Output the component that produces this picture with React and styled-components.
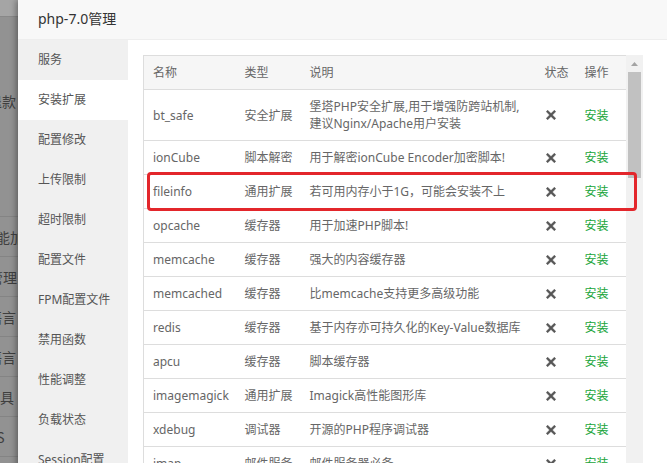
import React from "react";
import styled, { createGlobalStyle } from "styled-components";

const GlobalStyle = createGlobalStyle`
  html, body { margin: 0; padding: 0; overflow: hidden; }
  body {
    font-family: "Noto Sans", "Noto Sans CJK SC", sans-serif;
    font-size: 12px;
    color: #666;
  }
`;

const Page = styled.div`
  position: relative;
  width: 667px;
  height: 463px;
  overflow: hidden;
  background: #929292;
`;

const Backdrop = styled.div`
  display: flex;
  flex-direction: column;
`;

const BackTop = styled.div`
  height: 17px;
  background: #a5a5a5;
  border-bottom: 1px solid #888;
  box-sizing: border-box;
`;

const BackRow = styled.div`
  height: ${(p) => p.$h}px;
  border-bottom: ${(p) => (p.$line ? "1px solid #848484" : "none")};
  box-sizing: border-box;
  display: flex;
  align-items: ${(p) => (p.$top ? "flex-start" : "center")};
  padding-top: ${(p) => (p.$top ? p.$top : 0)}px;
  font-family: "Noto Sans CJK SC", sans-serif;
  font-size: 14px;
  color: #3f3f3f;
  white-space: nowrap;
`;

const BackText = styled.span`
  margin-left: ${(p) => p.$x}px;
`;

const Modal = styled.div`
  position: absolute;
  left: 18px;
  top: 0;
  width: 700px;
  height: 520px;
  background: #fff;
  box-shadow: -2px 0 6px rgba(0, 0, 0, 0.35);
  display: flex;
  flex-direction: column;
`;

const Header = styled.div`
  height: 40px;
  box-sizing: border-box;
  border-bottom: 1px solid #eee;
  background: #f8f8f8;
  padding-left: 20px;
  line-height: 37px;
  font-family: "Noto Sans", "Noto Sans CJK SC", sans-serif;
  font-size: 14px;
  color: #333;
`;

const Body = styled.div`
  flex: 1;
  display: flex;
  min-height: 0;
`;

const Sidebar = styled.div`
  width: 110px;
  flex-shrink: 0;
  background: #f0f0f0;
  display: flex;
  flex-direction: column;
`;

const NavItem = styled.div`
  height: 40px;
  line-height: 40px;
  padding-left: 20px;
  font-size: 12px;
  color: #555;
  background: ${(p) => (p.$active ? "#fff" : "transparent")};
  white-space: nowrap;
`;

const Content = styled.div`
  position: relative;
  flex: 1;
  padding: 15px 0 0 15px;
  display: flex;
  align-items: stretch;
`;

const TableWrap = styled.div`
  width: 483px;
  overflow: hidden;
`;

const Table = styled.table`
  width: 483px;
  table-layout: fixed;
  border-collapse: collapse;
  border: 1px solid #ddd;
`;

const Th = styled.th`
  text-align: left;
  font-weight: normal;
  background: #f6f6f6;
  color: #666;
  padding: 8px 9px;
  line-height: 17px;
  border-bottom: 1px solid #ddd;
  white-space: nowrap;
`;

const Td = styled.td`
  padding: 8px 9px;
  line-height: 17px;
  border-bottom: 1px solid #ddd;
  color: #666;
  white-space: nowrap;
  vertical-align: middle;
`;

const InstallLink = styled.a`
  color: #20a53a;
  text-decoration: none;
`;

const XIcon = styled.svg`
  display: block;
  width: 10px;
  height: 10px;
  margin-left: 1px;
`;

const ScrollTrack = styled.div`
  width: 17px;
  background: #f1f1f1;
  display: flex;
  flex-direction: column;
  align-items: center;
`;

const ScrollArrow = styled.div`
  height: 17px;
  display: flex;
  align-items: center;
  justify-content: center;
`;

const ScrollThumb = styled.div`
  width: 13px;
  height: 106px;
  background: #c1c1c1;
`;

const Highlight = styled.div`
  position: absolute;
  left: 19px;
  top: 132px;
  width: 490px;
  height: 39px;
  box-sizing: border-box;
  border: 3px solid #e3262b;
  border-radius: 4px;
  pointer-events: none;
`;

const nav = [
  "服务",
  "安装扩展",
  "配置修改",
  "上传限制",
  "超时限制",
  "配置文件",
  "FPM配置文件",
  "禁用函数",
  "性能调整",
  "负载状态",
  "Session配置",
];

const rows = [
  ["bt_safe", "安全扩展", ["堡塔PHP安全扩展,用于增强防跨站机制,", "建议Nginx/Apache用户安装"]],
  ["ionCube", "脚本解密", ["用于解密ionCube Encoder加密脚本!"]],
  ["fileinfo", "通用扩展", ["若可用内存小于1G，可能会安装不上"]],
  ["opcache", "缓存器", ["用于加速PHP脚本!"]],
  ["memcache", "缓存器", ["强大的内容缓存器"]],
  ["memcached", "缓存器", ["比memcache支持更多高级功能"]],
  ["redis", "缓存器", ["基于内存亦可持久化的Key-Value数据库"]],
  ["apcu", "缓存器", ["脚本缓存器"]],
  ["imagemagick", "通用扩展", ["Imagick高性能图形库"]],
  ["xdebug", "调试器", ["开源的PHP程序调试器"]],
  ["imap", "邮件服务", ["邮件服务器必备"]],
];

const backRows = [
  { h: 200, text: "申请退款", x: -40, top: 74, line: true },
  { h: 40, text: "性能加", x: -18, line: true },
  { h: 40, text: "文件管理", x: -39, line: true },
  { h: 40, text: "编程语言", x: -40, line: true },
  { h: 40, text: "编程语言", x: -40, line: true },
  { h: 40, text: "工具", x: -14, line: true },
  { h: 40, text: "JAVA、S", x: -50, line: true },
  { h: 40, text: "", x: 0, line: false },
];

function CloseMark() {
  return (
    <XIcon viewBox="0 0 10 10">
      <path
        d="M1.6 0.3 L5 3.6 L8.4 0.3 L9.7 1.6 L6.4 5 L9.7 8.4 L8.4 9.7 L5 6.4 L1.6 9.7 L0.3 8.4 L3.6 5 L0.3 1.6 Z"
        fill="#555"
        stroke="#555"
        strokeWidth="0.6"
        strokeLinejoin="round"
      />
    </XIcon>
  );
}

export default function App() {
  return (
    <Page>
      <GlobalStyle />
      <Backdrop>
        <BackTop />
        {backRows.map((r, i) => (
          <BackRow key={i} $h={r.h} $line={r.line} $top={r.top}>
            <BackText $x={r.x}>{r.text}</BackText>
          </BackRow>
        ))}
      </Backdrop>
      <Modal>
        <Header>php-7.0管理</Header>
        <Body>
          <Sidebar>
            {nav.map((n) => (
              <NavItem key={n} $active={n === "安装扩展"}>
                {n}
              </NavItem>
            ))}
          </Sidebar>
          <Content>
            <TableWrap>
              <Table>
                <colgroup>
                  <col style={{ width: 92 }} />
                  <col style={{ width: 65 }} />
                  <col style={{ width: 235 }} />
                  <col style={{ width: 40 }} />
                  <col style={{ width: 51 }} />
                </colgroup>
                <thead>
                  <tr>
                    <Th>名称</Th>
                    <Th>类型</Th>
                    <Th>说明</Th>
                    <Th>状态</Th>
                    <Th>操作</Th>
                  </tr>
                </thead>
                <tbody>
                  {rows.map(([name, type, desc]) => (
                    <tr key={name}>
                      <Td>{name}</Td>
                      <Td>{type}</Td>
                      <Td>
                        {desc.map((d, i) => (
                          <React.Fragment key={i}>
                            {i > 0 && <br />}
                            {d}
                          </React.Fragment>
                        ))}
                      </Td>
                      <Td>
                        <CloseMark />
                      </Td>
                      <Td>
                        <InstallLink href="#">安装</InstallLink>
                      </Td>
                    </tr>
                  ))}
                </tbody>
              </Table>
            </TableWrap>
            <ScrollTrack>
              <ScrollArrow>
                <svg width="7" height="4" viewBox="0 0 7 4">
                  <path d="M0 4 L3.5 0 L7 4 Z" fill="#a3a3a3" />
                </svg>
              </ScrollArrow>
              <ScrollThumb />
            </ScrollTrack>
            <Highlight />
          </Content>
        </Body>
      </Modal>
    </Page>
  );
}
